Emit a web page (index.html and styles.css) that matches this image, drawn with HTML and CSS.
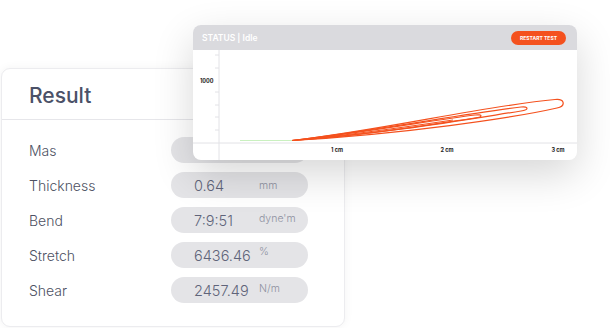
FILE: index.html
```html
<!DOCTYPE html>
<html lang="en">
<head>
    <meta charset="UTF-8">
    <meta name="viewport" content="width=device-width, initial-scale=1.0">
    <title>Result</title>
    <link rel="stylesheet" href="styles.css">
</head>
<body>
    <div class="stage">
        <section class="result-card">
            <h2 class="result-title">Result</h2>
            <ul class="result-list">
                <li class="result-row">
                    <span class="label">Mas</span>
                    <span class="pill"><span class="value"></span><span class="unit"></span></span>
                </li>
                <li class="result-row">
                    <span class="label">Thickness</span>
                    <span class="pill"><span class="value">0.64</span><span class="unit unit-mm">mm</span></span>
                </li>
                <li class="result-row">
                    <span class="label">Bend</span>
                    <span class="pill"><span class="value">7:9:51</span><span class="unit">dyne'm</span></span>
                </li>
                <li class="result-row">
                    <span class="label">Stretch</span>
                    <span class="pill"><span class="value">6436.46</span><span class="unit unit-top">%</span></span>
                </li>
                <li class="result-row">
                    <span class="label">Shear</span>
                    <span class="pill"><span class="value">2457.49</span><span class="unit">N/m</span></span>
                </li>
            </ul>
        </section>

        <section class="chart-card">
            <div class="chart-header">
                <span class="status">STATUS | Idle</span>
                <button class="restart-btn">RESTART TEST</button>
            </div>
            <svg class="chart" width="384" height="110" viewBox="0 0 384 110">
                <!-- axes -->
                <line x1="26" y1="0" x2="26" y2="110" stroke="#e2e2e6" stroke-width="1"/>
                <line x1="0" y1="93" x2="384" y2="93" stroke="#e2e2e6" stroke-width="1"/>
                <g stroke="#e2e2e6" stroke-width="1">
                    <line x1="22" y1="5" x2="26" y2="5"/>
                    <line x1="22" y1="18" x2="26" y2="18"/>
                    <line x1="22" y1="42" x2="26" y2="42"/>
                    <line x1="22" y1="55" x2="26" y2="55"/>
                    <line x1="22" y1="67" x2="26" y2="67"/>
                    <line x1="22" y1="80" x2="26" y2="80"/>
                </g>
                <text class="axis-text" x="7" y="33">1000</text>
                <text class="axis-text" x="144" y="102" text-anchor="middle">1 cm</text>
                <text class="axis-text" x="254" y="102" text-anchor="middle">2 cm</text>
                <text class="axis-text" x="365" y="102" text-anchor="middle">3 cm</text>

                <!-- curve -->
                <line x1="47" y1="90.5" x2="99" y2="90.5" stroke="#c9f0bf" stroke-width="1"/>
                <g fill="none" stroke="#f4511e" stroke-width="1.2">
                    <path d="M99,90.5 C190,80 290,56 362,49.5 C372,48.5 373,56 364,58 C320,68 210,84 99,90.5"/>
                    <path d="M99,90.5 C180,81 270,64 328,57 C336,56 336,60 328,61 C270,70 190,84 99,90.5"/>
                    <path d="M99,90.5 C170,83 240,70 282,65 C290,64 290,67 282,68 C240,74 180,85 99,90.5"/>
                    <path d="M99,90.5 C160,85 220,76 260,70"/>
                </g>
            </svg>
        </section>
    </div>
</body>
</html>
```

FILE: styles.css
```css
* {
    margin: 0;
    padding: 0;
    box-sizing: border-box;
    font-family: 'Inter', sans-serif;
}

body {
    background-color: #ffffff;
    width: 610px;
    height: 328px;
    overflow: hidden;
}

.stage {
    position: relative;
    padding: 68px 0 0 1px;
}

/* Result card */
.result-card {
    width: 344px;
    height: 259px;
    background-color: #ffffff;
    border: 1px solid #ececef;
    border-radius: 9px;
    box-shadow: 0 0 10px rgba(0, 0, 0, 0.05);
}

.result-title {
    height: 51px;
    display: flex;
    align-items: center;
    padding: 3px 27px 0;
    border-bottom: 1px solid #e6e6ea;
    font-size: 21px;
    font-weight: 500;
    color: #4b5168;
}

.result-list {
    list-style: none;
    display: flex;
    flex-direction: column;
    gap: 9px;
    padding: 17px 0 0 27px;
}

.result-row {
    display: flex;
    align-items: center;
    height: 26px;
}

.label {
    width: 142px;
    font-size: 14px;
    font-weight: 300;
    color: #4d5162;
}

.pill {
    display: flex;
    align-items: center;
    width: 137px;
    height: 26px;
    padding-left: 23px;
    border-radius: 13px;
    background-color: #e4e4e7;
}

.value {
    width: 65px;
    font-size: 14.5px;
    font-weight: 300;
    color: #60647a;
}

.unit {
    font-size: 10.5px;
    font-weight: 300;
    color: #8d90a0;
    margin-top: -4px;
}

.unit-mm {
    margin-top: 0;
}

.unit-top {
    margin-top: -8px;
}

/* Chart card */
.chart-card {
    position: absolute;
    left: 193px;
    top: 25px;
    width: 384px;
    height: 135px;
    background-color: #ffffff;
    border-radius: 8px;
    overflow: hidden;
    box-shadow: 0 14px 40px rgba(0, 0, 0, 0.16);
}

.chart-header {
    display: flex;
    justify-content: space-between;
    align-items: center;
    height: 25px;
    padding: 0 11px 0 9px;
    background-color: #dadade;
}

.status {
    color: #ffffff;
    font-size: 8.5px;
    font-weight: 600;
}

.restart-btn {
    height: 14px;
    padding: 0 9px;
    border: none;
    border-radius: 7px;
    background-color: #f4511e;
    color: #ffffff;
    font-size: 5px;
    font-weight: 700;
}

.chart {
    display: block;
}

.axis-text {
    font-family: 'Inter', sans-serif;
    font-size: 5.5px;
    font-weight: 700;
    fill: #222222;
}
```
